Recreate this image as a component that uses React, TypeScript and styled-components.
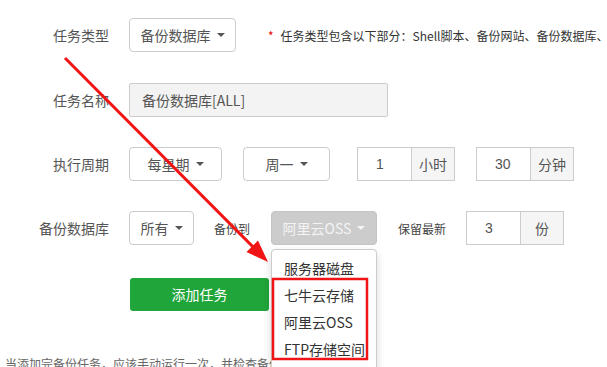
import React from 'react';
import styled, { createGlobalStyle } from 'styled-components';

const GlobalStyle = createGlobalStyle`
  html, body {
    margin: 0;
    padding: 0;
    background: #fff;
    overflow: hidden;
  }
  body {
    font-family: "Noto Sans CJK SC", "Microsoft YaHei", "Liberation Sans", sans-serif;
    color: #555;
  }
`;

const Page = styled.div`
  position: relative;
  width: 607px;
  height: 367px;
  overflow: hidden;
  padding-top: 18px;
  box-sizing: border-box;
`;

const Row = styled.div<{ $mb?: number }>`
  display: flex;
  align-items: center;
  height: 34px;
  margin-bottom: ${({ $mb }) => $mb ?? 30}px;
  white-space: nowrap;
`;

const Label = styled.div`
  width: 109px;
  margin-right: 20px;
  text-align: right;
  font-size: 14px;
  color: #555;
  flex-shrink: 0;
`;

const Text = styled.span<{ $ml?: number }>`
  font-size: 12px;
  color: #444;
  margin-left: ${({ $ml }) => $ml ?? 0}px;
  flex-shrink: 0;
`;

const SelectButton = styled.button<{ $w: number; $ml?: number; $disabled?: boolean }>`
  display: flex;
  align-items: center;
  justify-content: center;
  box-sizing: border-box;
  width: ${({ $w }) => $w}px;
  height: 34px;
  margin: 0 0 0 ${({ $ml }) => $ml ?? 0}px;
  padding: 0 10px;
  border: 1px solid ${({ $disabled }) => ($disabled ? '#c4c4c4' : '#ccc')};
  border-radius: 4px;
  background: ${({ $disabled }) => ($disabled ? '#cccccc' : '#fff')};
  color: ${({ $disabled }) => ($disabled ? '#f4f4f4' : '#555')};
  font-family: inherit;
  font-size: 14px;
  flex-shrink: 0;
`;

const Caret = styled.span<{ $light?: boolean }>`
  display: inline-block;
  width: 0;
  height: 0;
  margin-left: 6px;
  border-top: 4px solid ${({ $light }) => ($light ? '#f4f4f4' : '#555')};
  border-left: 4px solid transparent;
  border-right: 4px solid transparent;
`;

const TextInput = styled.div`
  box-sizing: border-box;
  width: 259px;
  height: 34px;
  display: flex;
  align-items: center;
  padding: 0 12px;
  border: 1px solid #ccc;
  border-radius: 2px;
  background: #f3f3f3;
  color: #555;
  font-size: 14px;
`;

const InputGroup = styled.div<{ $ml?: number }>`
  display: flex;
  height: 34px;
  margin-left: ${({ $ml }) => $ml ?? 0}px;
  flex-shrink: 0;
`;

const GroupInput = styled.div`
  box-sizing: border-box;
  width: 54px;
  height: 34px;
  display: flex;
  align-items: center;
  padding-left: 18px;
  border: 1px solid #ccc;
  border-right: none;
  background: #fff;
  color: #555;
  font-size: 14px;
  font-family: "Liberation Sans", sans-serif;
`;

const Addon = styled.div`
  box-sizing: border-box;
  width: 44px;
  height: 34px;
  display: flex;
  align-items: center;
  justify-content: center;
  border: 1px solid #ccc;
  background: #f5f5f5;
  color: #555;
  font-size: 14px;
`;

const Hint = styled.span`
  margin-left: 32px;
  font-size: 12px;
  color: #333;
`;

const Star = styled.span`
  color: #e00;
  margin-right: 7px;
`;

const MenuAnchor = styled.div`
  position: relative;
  margin-left: 21px;
  flex-shrink: 0;
`;

const Menu = styled.ul`
  position: absolute;
  top: 38px;
  left: 0;
  z-index: 2;
  box-sizing: border-box;
  width: 106px;
  margin: 0;
  padding: 5px 0 20px;
  list-style: none;
  background: #fff;
  border: 1px solid #ccc;
  border-radius: 4px;
  box-shadow: 0 4px 10px rgba(0, 0, 0, 0.15);
`;

const MenuItem = styled.li`
  height: 27px;
  line-height: 27px;
  padding-left: 12px;
  font-size: 14px;
  color: #333;
`;

const SubmitButton = styled.button`
  width: 139px;
  height: 33px;
  margin-left: 130px;
  border: none;
  border-radius: 3px;
  background: #20a53a;
  color: #fff;
  font-family: inherit;
  font-size: 14px;
`;

const Note = styled.p`
  margin: 0;
  padding-left: 5px;
  font-size: 12px;
  line-height: 17px;
  color: #666;
  white-space: nowrap;
`;

const Overlay = styled.svg`
  position: absolute;
  inset: 0;
  z-index: 5;
  pointer-events: none;
`;

export default function App() {
  return (
    <Page>
      <GlobalStyle />
      <Row $mb={31}>
        <Label>任务类型</Label>
        <SelectButton $w={107}>
          备份数据库<Caret />
        </SelectButton>
        <Hint>
          <Star>*</Star>任务类型包含以下部分：Shell脚本、备份网站、备份数据库、日志切割
        </Hint>
      </Row>
      <Row>
        <Label>任务名称</Label>
        <TextInput>备份数据库[ALL]</TextInput>
      </Row>
      <Row>
        <Label>执行周期</Label>
        <SelectButton $w={93}>
          每星期<Caret />
        </SelectButton>
        <SelectButton $w={87} $ml={21}>
          周一<Caret />
        </SelectButton>
        <InputGroup $ml={27}>
          <GroupInput>1</GroupInput>
          <Addon>小时</Addon>
        </InputGroup>
        <InputGroup $ml={21}>
          <GroupInput>30</GroupInput>
          <Addon>分钟</Addon>
        </InputGroup>
      </Row>
      <Row $mb={32}>
        <Label>备份数据库</Label>
        <SelectButton $w={65}>
          所有<Caret />
        </SelectButton>
        <Text $ml={20}>备份到</Text>
        <MenuAnchor>
          <SelectButton $w={106} $disabled>
            阿里云OSS<Caret $light />
          </SelectButton>
          <Menu>
            <MenuItem>服务器磁盘</MenuItem>
            <MenuItem>七牛云存储</MenuItem>
            <MenuItem>阿里云OSS</MenuItem>
            <MenuItem>FTP存储空间</MenuItem>
          </Menu>
        </MenuAnchor>
        <Text $ml={21}>保留最新</Text>
        <InputGroup $ml={20}>
          <GroupInput>3</GroupInput>
          <Addon>份</Addon>
        </InputGroup>
      </Row>
      <Row $mb={44}>
        <SubmitButton>添加任务</SubmitButton>
      </Row>
      <Note>当添加完备份任务，应该手动运行一次，并检查备份文件是否完整</Note>
      <Overlay width="607" height="367" viewBox="0 0 607 367">
        <line x1="65" y1="58" x2="256" y2="250" stroke="#f01414" strokeWidth="3" />
        <polygon points="268,262 246.5,252 258,240.5" fill="#f01414" />
        <rect x="273" y="279" width="94" height="80" fill="none" stroke="#f01414" strokeWidth="2.5" />
      </Overlay>
    </Page>
  );
}
